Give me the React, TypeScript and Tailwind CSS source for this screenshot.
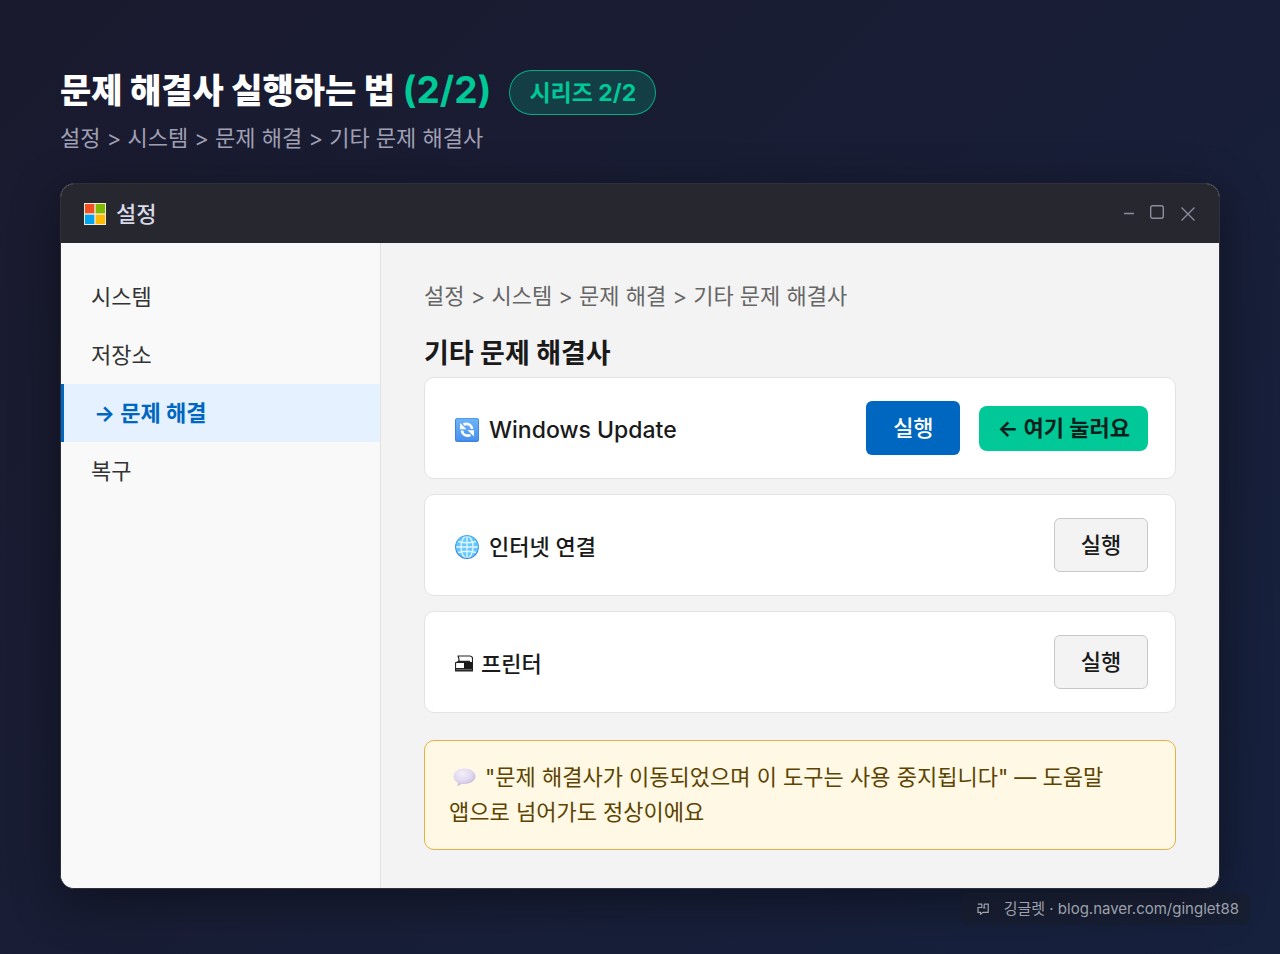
import type { ReactNode } from "react";

const crumbs = "설정 > 시스템 > 문제 해결 > 기타 문제 해결사";

function WindowsLogo() {
  return (
    <svg viewBox="0 0 22 22" className="size-[22px] shrink-0" aria-hidden="true">
      <rect width="22" height="22" fill="#f1ead9" />
      <rect x="1" y="1" width="9.3" height="9.3" fill="#f25022" />
      <rect x="11.7" y="1" width="9.3" height="9.3" fill="#7fba00" />
      <rect x="1" y="11.7" width="9.3" height="9.3" fill="#00a4ef" />
      <rect x="11.7" y="11.7" width="9.3" height="9.3" fill="#ffb900" />
    </svg>
  );
}

function UpdateIcon() {
  return (
    <svg viewBox="0 0 24 24" className="size-6 shrink-0" aria-hidden="true">
      <defs>
        <linearGradient id="update-fill" x1="0" y1="0" x2="0" y2="1">
          <stop offset="0" stopColor="#6cb4fa" />
          <stop offset="1" stopColor="#4a92ee" />
        </linearGradient>
      </defs>
      <rect width="24" height="24" rx="2.5" fill="#3f83dc" />
      <rect x="1" y="0.6" width="22.2" height="21.8" rx="2" fill="url(#update-fill)" />
      <g fill="none" stroke="#fff" strokeWidth="2.6">
        <path d="M8.500 6.500C12 5 16.600 6.200 17 11" />
        <path d="M15.500 17C12 18.500 7.400 17.300 7 12.500" />
      </g>
      <path d="M5 5V11.200H11.500Z" fill="#fff" />
      <path d="M19 18.500V12.300H12.500Z" fill="#fff" />
    </svg>
  );
}

function GlobeIcon() {
  return (
    <svg viewBox="0 0 24 24" className="size-6 shrink-0" aria-hidden="true">
      <defs>
        <linearGradient id="globe-line" x1="0" y1="0" x2="0" y2="1">
          <stop offset="0" stopColor="#4aaee8" />
          <stop offset="1" stopColor="#3a7fd6" />
        </linearGradient>
      </defs>
      <circle cx="12" cy="12" r="11.300" fill="#65c8ff" />
      <g fill="none" stroke="#e2f6ff" strokeWidth="1.300">
        <path d="M12 1v22M1 12h22M3.200 6.500Q12 9 20.800 6.500M3.200 17.500Q12 15 20.800 17.500" />
        <ellipse cx="12" cy="12" rx="6" ry="11" />
      </g>
      <circle cx="12" cy="12" r="11.400" fill="none" stroke="url(#globe-line)" strokeWidth="1.100" />
    </svg>
  );
}

function PrinterIcon() {
  return (
    <svg viewBox="0.5 0.5 18 17" className="-mr-0.5 h-[17px] w-[18px] shrink-0" aria-hidden="true">
      <g fill="none" stroke="#222" strokeWidth="1.200" strokeLinejoin="round">
        <path d="M4.200 6.800C5 4.500 4.200 3 3.500 1.500H15.500Q18 1.700 18 4V16.300H1V8.500L4.200 6.800H15.500" />
        <path d="M1 8H10M1 14H18" />
      </g>
      <path d="M9.500 7.500H18V14H9.500Z" fill="#191919" />
      <path d="M1.500 15.600H17.500" stroke="#222" strokeWidth="1.600" />
    </svg>
  );
}

function BubbleIcon() {
  return (
    <svg viewBox="0 0 24 20" className="mr-2 ml-1 inline-block h-5 w-6 align-[-3px]" aria-hidden="true">
      <defs>
        <radialGradient id="bubble-fill" cx="0.4" cy="0.3" r="0.75">
          <stop offset="0" stopColor="#f3effb" />
          <stop offset="0.6" stopColor="#e0d7ef" />
          <stop offset="1" stopColor="#bdaed6" />
        </radialGradient>
      </defs>
      <path
        d="M11.500 0.500C17.500 0.500 22.500 4 22.500 8.300S17.500 16 11.500 16C10.400 16 9.400 15.900 8.500 15.700C7.200 17 5.500 17.900 4.100 17.900C4.800 17 5.100 15.700 4.900 14.700C2.200 13.300 0.500 11.100 0.500 8.300C0.500 4 5.500 0.500 11.500 0.500Z"
        fill="url(#bubble-fill)"
      />
    </svg>
  );
}

function BlogIcon() {
  return (
    <svg viewBox="0 0 12 12" className="size-3" fill="none" stroke="#a0a3ad" strokeWidth="1.200" aria-hidden="true">
      <path d="M0.800 1.200H4.800V4.500H1V9.300H3.500V11.200L6 9.300H11.200V1.200H7.200M7.200 1.200V5M6 5H8.500" />
    </svg>
  );
}

const navItems = [
  { label: "시스템", active: false },
  { label: "저장소", active: false },
  { label: "문제 해결", active: true },
  { label: "복구", active: false },
];

function Troubleshooter({
  icon,
  name,
  primary = false,
  children,
}: {
  icon: ReactNode;
  name: string;
  primary?: boolean;
  children?: ReactNode;
}) {
  return (
    <li className="flex h-[102px] items-center rounded-[10px] border border-[#e3e3e3] bg-white pr-[27px] pl-[30px]">
      <div className="flex items-center gap-2.5 pt-[3px] font-medium text-[#1a1a1a]">
        {icon}
        <span className={primary ? "text-[23px]" : ""}>{name}</span>
      </div>
      <div className="ml-auto flex items-center gap-[19px]">
        <button
          type="button"
          aria-label={`${name} 실행`}
          className={
            primary
              ? "h-[54px] w-[94px] rounded-md bg-[#0067c0] font-medium text-white"
              : "h-[54px] w-[94px] rounded-md border border-[#c8c8c8] bg-[#f3f3f3] font-medium text-[#1a1a1a]"
          }
        >
          실행
        </button>
        {children}
      </div>
    </li>
  );
}

export default function App() {
  return (
    <div className="flex min-h-screen flex-col bg-linear-135 from-[#1a1a2e] to-[#16213e] px-[60px] pt-[70px] font-['Inter','Noto_Sans_CJK_KR',sans-serif] text-[22px] leading-8">
      <header>
        <div className="flex items-center gap-[18px]">
          <h1 className="pb-1 text-[34px] leading-10 font-extrabold text-white">
            문제 해결사 실행하는 법 <span className="text-[37px] font-bold text-[#00c896]">(2/2)</span>
          </h1>
          <span className="flex h-[45px] items-center rounded-full border border-[#00c896]/80 bg-[#00c896]/20 px-[19px] text-[23px] font-bold text-[#00c896]">
            시리즈 2/2
          </span>
        </div>
        <p className="mt-[7px] text-[#a0a0b4]">{crumbs}</p>
      </header>

      <section className="mt-[29px] flex flex-1 flex-col overflow-hidden rounded-[14px] border border-[#2f303a] bg-[#f3f3f3] shadow-[0_12px_48px_rgba(0,0,0,0.4)]">
        <div className="flex h-[59px] shrink-0 items-center bg-[#26272f] px-[23px]">
          <WindowsLogo />
          <span className="ml-2.5 font-medium text-[#d8d8e8]">설정</span>
          <div className="ml-auto flex items-center gap-4 text-[#8d8d9f]">
            <button type="button" aria-label="최소화">
              <svg viewBox="0 0 10 14" className="h-3.5 w-2.5" stroke="currentColor" strokeWidth="1.500">
                <path d="M0 6.500H10" />
              </svg>
            </button>
            <button type="button" aria-label="최대화">
              <svg viewBox="0 0 14 14" className="mb-1 size-3.5" fill="none" stroke="currentColor" strokeWidth="1.400">
                <rect x="0.700" y="0.700" width="12.600" height="12.600" rx="2" />
              </svg>
            </button>
            <button type="button" aria-label="닫기">
              <svg viewBox="0 0 16 16" className="size-4" fill="none" stroke="currentColor" strokeWidth="1.300">
                <path d="M1.500 1.500L14.500 14.500M14.500 1.500L1.500 14.500" />
              </svg>
            </button>
          </div>
        </div>

        <div className="flex flex-1">
          <nav className="w-80 shrink-0 border-r border-[#e3e3e3] bg-[#f9f9f9] pt-[25px]">
            {navItems.map((item) => (
              <a
                key={item.label}
                href="#"
                aria-current={item.active ? "page" : undefined}
                className={
                  item.active
                    ? "flex h-[58px] items-center border-l-[3px] border-[#0067c0] bg-[#e5f1ff] px-[30px] font-bold text-[#0067c0]"
                    : "flex h-[58px] items-center px-[30px] text-[#333333]"
                }
              >
                {item.active ? "→ " : ""}
                {item.label}
              </a>
            ))}
          </nav>

          <main className="flex-1 px-[43px] pt-[37px] pb-[38px]">
            <p className="text-[#666666]">{crumbs}</p>
            <h2 className="mt-[25px] text-[27px] leading-[34px] font-bold text-[#1a1a1a]">기타 문제 해결사</h2>
            <ul className="mt-1.5 flex flex-col gap-[15px]">
              <Troubleshooter icon={<UpdateIcon />} name="Windows Update" primary>
                <span className="flex h-[45px] items-center rounded-lg bg-[#00c896] px-[18px] font-bold text-[#0d1f1c]">
                  ← 여기 눌러요
                </span>
              </Troubleshooter>
              <Troubleshooter icon={<GlobeIcon />} name="인터넷 연결" />
              <Troubleshooter icon={<PrinterIcon />} name="프린터" />
            </ul>
            <p className="mt-[27px] rounded-[10px] border border-[#e5b045] bg-[#fff8e5] px-6 py-[19px] leading-[35px] break-keep text-[#5c4400]">
              <BubbleIcon />
              "문제 해결사가 이동되었으며 이 도구는 사용 중지됩니다" — 도움말 앱으로 넘어가도 정상이에요
            </p>
          </main>
        </div>
      </section>

      <footer className="-mr-[30px] flex h-[65px] items-start justify-end pt-1">
        <div className="z-10 flex h-8 items-center gap-[15px] rounded-lg bg-[#181c27]/50 pr-[11px] pl-4 text-[15px] text-[#9da1ac]">
          <BlogIcon />
          <span>깅글렛 · blog.naver.com/ginglet88</span>
        </div>
      </footer>
    </div>
  );
}
